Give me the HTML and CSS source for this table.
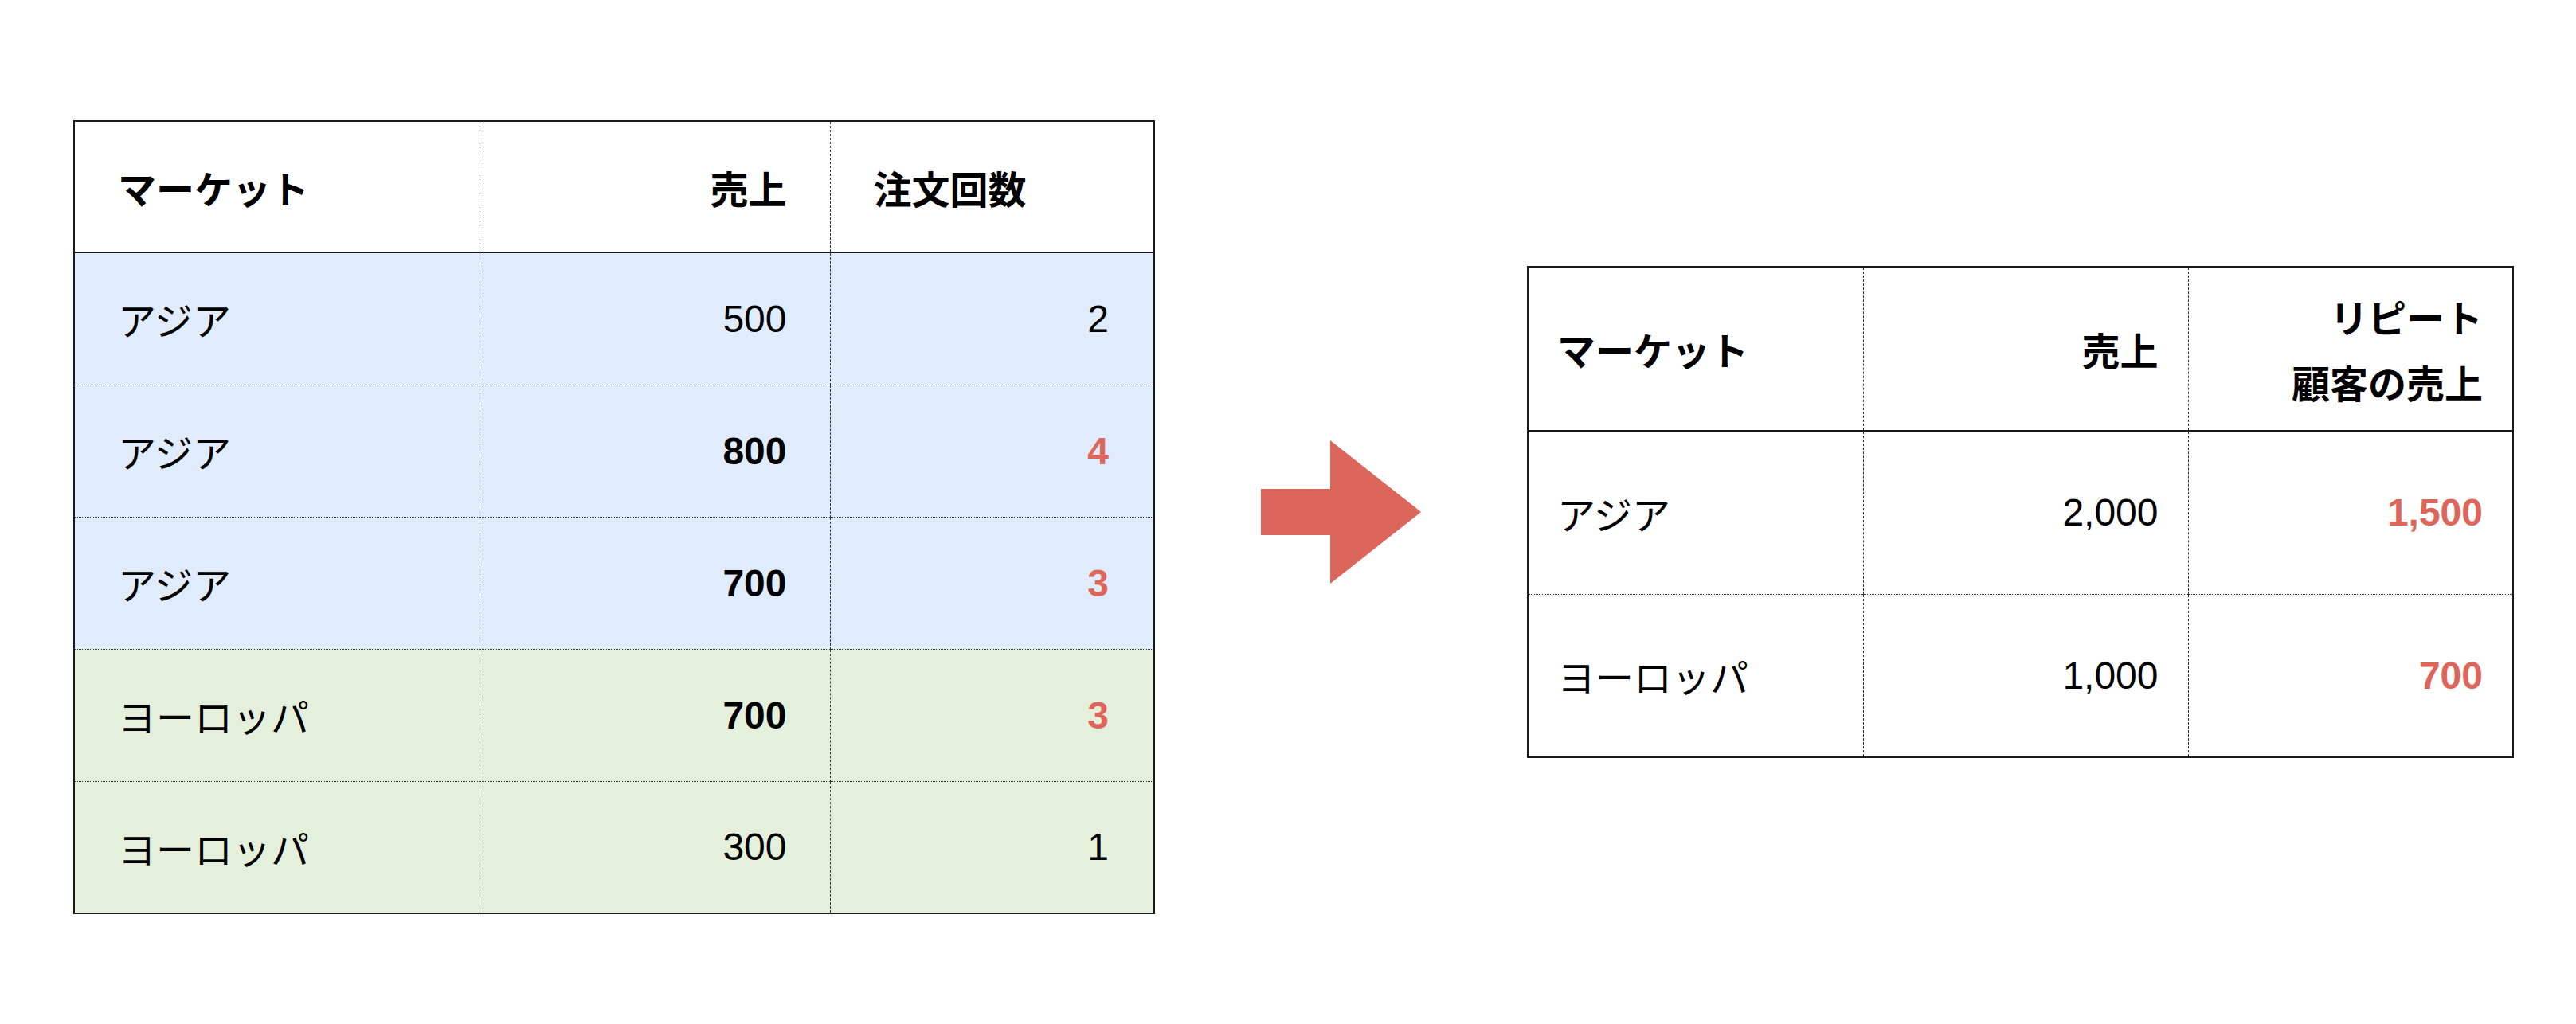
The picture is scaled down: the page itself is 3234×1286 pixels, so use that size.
FILE: index.html
```html
<!DOCTYPE html>
<html lang="ja">
<head>
<meta charset="utf-8">
<title>マーケット売上</title>
<link rel="stylesheet" href="styles.css">
</head>
<body>
<div class="stage">
  <table class="tbl tbl-left">
    <colgroup><col class="c1"><col class="c2"><col class="c3"></colgroup>
    <thead>
      <tr><th class="l">マーケット</th><th class="r">売上</th><th class="l">注文回数</th></tr>
    </thead>
    <tbody>
      <tr class="asia"><td class="l jp">アジア</td><td class="r num">500</td><td class="r num">2</td></tr>
      <tr class="asia"><td class="l jp">アジア</td><td class="r num b">800</td><td class="r num b red">4</td></tr>
      <tr class="asia"><td class="l jp">アジア</td><td class="r num b">700</td><td class="r num b red">3</td></tr>
      <tr class="eu"><td class="l jp">ヨーロッパ</td><td class="r num b">700</td><td class="r num b red">3</td></tr>
      <tr class="eu"><td class="l jp">ヨーロッパ</td><td class="r num">300</td><td class="r num">1</td></tr>
    </tbody>
  </table>

  <svg class="arrow" width="201" height="180" viewBox="0 0 201 180" aria-hidden="true">
    <polygon points="0,61 87,61 87,0 201,90 87,180 87,119 0,119" fill="#dc665b"/>
  </svg>

  <table class="tbl tbl-right">
    <colgroup><col class="d1"><col class="d2"><col class="d3"></colgroup>
    <thead>
      <tr><th class="l">マーケット</th><th class="r">売上</th><th class="r two">リピート<br>顧客の売上</th></tr>
    </thead>
    <tbody>
      <tr><td class="l jp">アジア</td><td class="r num">2,000</td><td class="r num b red">1,500</td></tr>
      <tr><td class="l jp">ヨーロッパ</td><td class="r num">1,000</td><td class="r num b red">700</td></tr>
    </tbody>
  </table>
</div>
</body>
</html>
```

FILE: styles.css
```css
html, body {
  margin: 0;
  padding: 0;
  background: #ffffff;
}

.stage {
  display: flex;
  align-items: flex-start;
  padding-left: 92px;
  font-family: "Noto Sans CJK JP", "Liberation Sans", sans-serif;
  color: #000;
}

.tbl {
  border-collapse: collapse;
  table-layout: fixed;
  border: 2px solid #1a1a1a;
  flex: none;
}

.tbl th,
.tbl td {
  padding: 0;
  vertical-align: middle;
  font-size: 48px;
  white-space: nowrap;
}

.tbl th {
  font-weight: 700;
  border-bottom: 2px solid #1a1a1a;
}

.tbl th + th,
.tbl td + td {
  border-left: 1px dashed #333;
}

.tbl tbody tr + tr td {
  border-top: 1px dotted #333;
}

.jp {
  font-weight: 400;
}

.num {
  font-family: "Liberation Sans", "Noto Sans", sans-serif;
  font-weight: 400;
}

.num.b {
  font-weight: 700;
}

.red {
  color: #dc665b;
}

.l { text-align: left; }
.r { text-align: right; }

/* left table */
.tbl-left {
  width: 1356px;
  margin-top: 151px;
}

.tbl-left .c1 { width: 509px; }
.tbl-left .c2 { width: 440px; }
.tbl-left .c3 { width: 407px; }

.tbl-left thead tr { height: 165px; }
.tbl-left tbody tr { height: 166px; }

.tbl-left th.l,
.tbl-left td.l { padding-left: 54px; }
.tbl-left th.r,
.tbl-left td.r { padding-right: 54px; }
.tbl-left td:last-child.r { padding-right: 56px; }

.asia { background: #e0ecfc; }
.eu { background: #e5f0dc; }

.arrow {
  flex: none;
  display: block;
  margin-left: 133px;
  margin-top: 553px;
}

/* right table */
.tbl-right {
  width: 1237px;
  margin-left: 133px;
  margin-top: 334px;
}

.tbl-right .d1 { width: 421px; }
.tbl-right .d2 { width: 408px; }
.tbl-right .d3 { width: 408px; }

.tbl-right thead tr { height: 206px; }
.tbl-right tbody tr { height: 205px; }

.tbl-right th.l,
.tbl-right td.l { padding-left: 36px; }
.tbl-right th.r,
.tbl-right td.r { padding-right: 37px; }

.tbl-right th.two {
  line-height: 82px;
}
```
